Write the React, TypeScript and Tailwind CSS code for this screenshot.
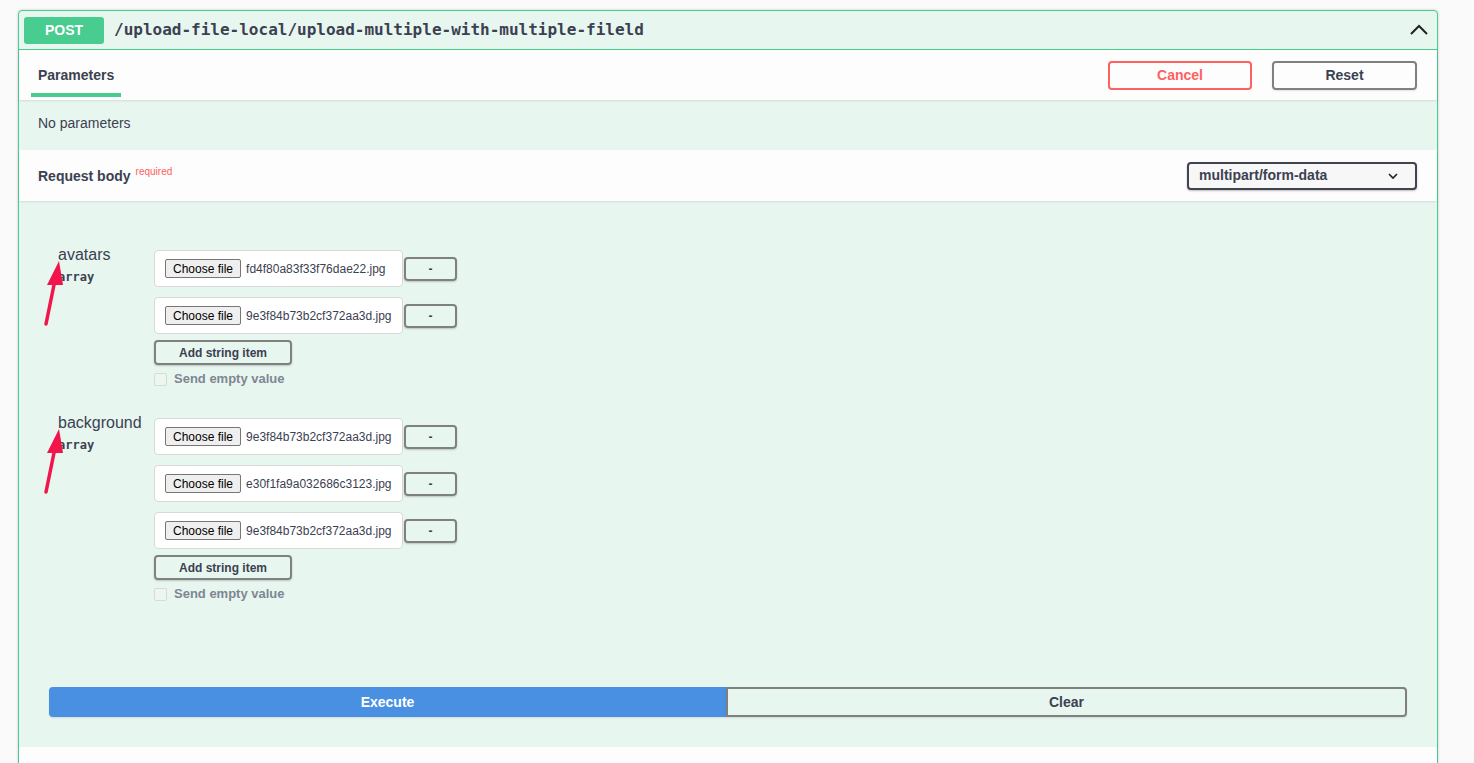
import React from 'react';

const sans = { fontFamily: '"Liberation Sans", Arial, sans-serif' };

function FileRow({ name }: { name: string }) {
  return (
    <div className="flex items-center">
      <div className="flex-none w-[249px] h-[37px] bg-white border border-[#d9d9d9] rounded-[4px] flex items-center pl-[10px] whitespace-nowrap">
        <span className="flex-none h-[19px] px-[7px] flex items-center bg-[#efefef] border border-[#767676] rounded-[2px] text-[12px] text-black">Choose file</span>
        <span className="ml-[5px] text-[12px] text-[#3b4151]">{name}</span>
      </div>
      <button className="flex-none ml-[1px] w-[53px] h-[24px] border-2 border-[#808080] rounded-[4px] shadow-[0_1px_2px_rgba(0,0,0,0.2)] text-[12px] font-bold text-[#3b4151] leading-none">-</button>
    </div>
  );
}

function Arrow() {
  return (
    <svg width="24" height="70" viewBox="0 0 24 70" className="absolute left-[4px] top-[14px]">
      <line x1="4" y1="64" x2="13" y2="20" stroke="#f2154b" strokeWidth="3.5" strokeLinecap="round" />
      <polygon points="17,1 5,25 21,25" fill="#f2154b" />
    </svg>
  );
}

function ArrayParam({ label, files }: { label: string; files: string[] }) {
  return (
    <div className="flex">
      <div className="flex-none w-[116px] pl-[20px] relative mt-[-4px]">
        <div className="text-[16px] text-[#3b4151] leading-[18px]">{label}</div>
        <div className="font-['DejaVu_Sans_Mono',monospace] font-bold text-[12px] text-[#3b4151] mt-[4px]">array</div>
        <Arrow />
      </div>
      <div className="flex flex-col">
        <div className="flex flex-col gap-[10px]">
          {files.map((f, i) => <FileRow key={i} name={f} />)}
        </div>
        <button className="mt-[6px] w-[138px] h-[25px] border-2 border-[#808080] rounded-[4px] shadow-[0_1px_2px_rgba(0,0,0,0.2)] text-[12px] font-bold text-[#3b4151]">Add string item</button>
        <div className="flex items-center mt-[6px] h-[16px]">
          <span className="w-[13px] h-[13px] border border-[#d6dbd8] rounded-[2px] bg-[#eef6f2]" />
          <span className="ml-[7px] text-[13px] font-bold text-[#7e8692]">Send empty value</span>
        </div>
      </div>
    </div>
  );
}

export default function App() {
  return (
    <div className="min-h-screen bg-[#fafafa] pt-[10px] pl-[18px]" style={sans}>
      <div className="w-[1420px] border border-[#49cc90] rounded-[4px] bg-[#e8f6f0] shadow-[0_0_3px_rgba(0,0,0,0.19)]">
        {/* Summary */}
        <div className="flex items-center h-[39px] px-[5px] border-b border-[#49cc90]">
          <span className="w-[80px] h-[27px] flex items-center justify-center bg-[#49cc90] rounded-[3px] text-white font-bold text-[14px]">POST</span>
          <span className="ml-[10px] font-['DejaVu_Sans_Mono',monospace] font-bold text-[16px] text-[#3b4151]">/upload-file-local/upload-multiple-with-multiple-fileld</span>
          <svg width="20" height="20" viewBox="0 0 20 20" className="ml-auto mr-[3px]">
            <path d="M2 14 L10 6 L18 14" fill="none" stroke="#222" strokeWidth="2" />
          </svg>
        </div>

        {/* Tab header */}
        <div className="flex items-center h-[50px] bg-[#fcfdfc] shadow-[0_1px_2px_rgba(0,0,0,0.1)] px-[12px]">
          <div className="h-full flex flex-col justify-center relative px-[7px]">
            <span className="text-[14px] font-bold text-[#3b4151]">Parameters</span>
            <span className="absolute left-0 right-0 bottom-[3px] h-[4px] bg-[#49cc90]" />
          </div>
          <button className="ml-auto w-[144px] h-[29px] border-2 border-[#ff6060] rounded-[4px] text-[14px] font-bold text-[#ff6060]">Cancel</button>
          <button className="ml-[20px] mr-[8px] w-[145px] h-[29px] border-2 border-[#808080] rounded-[4px] text-[14px] font-bold text-[#3b4151] shadow-[0_1px_2px_rgba(0,0,0,0.1)]">Reset</button>
        </div>

        <div className="h-[50px] flex items-center pb-[4px] px-[19px] text-[14px] text-[#3b4151]">No parameters</div>

        {/* Request body header */}
        <div className="flex items-center h-[51px] bg-[#fcfdfc] shadow-[0_1px_2px_rgba(0,0,0,0.1)] px-[19px]">
          <span className="text-[14px] font-bold text-[#3b4151] mt-[1px]">Request body</span>
          <span className="text-[10px] text-[#ff6060] ml-[5px] mb-[9px]">required</span>
          <div className="ml-auto mr-[1px] w-[230px] h-[28px] border-2 border-[#41444e] rounded-[4px] bg-[#f7f7f7] flex items-center px-[10px] shadow-[0_1px_2px_rgba(0,0,0,0.25)]">
            <span className="text-[14px] font-bold text-[#3b4151]">multipart/form-data</span>
            <svg width="12" height="8" viewBox="0 0 12 8" className="ml-auto mr-[6px]">
              <path d="M2 2 L6 6 L10 2" fill="none" stroke="#222" strokeWidth="1.6" />
            </svg>
          </div>
        </div>

        {/* Body */}
        <div className="pt-[49px] px-[19px] flex flex-col gap-[31px]">
          <ArrayParam label="avatars" files={['fd4f80a83f33f76dae22.jpg', '9e3f84b73b2cf372aa3d.jpg']} />
          <ArrayParam label="background" files={['9e3f84b73b2cf372aa3d.jpg', 'e30f1fa9a032686c3123.jpg', '9e3f84b73b2cf372aa3d.jpg']} />
        </div>

        <div className="flex px-[30px] mt-[85px] pb-[30px]">
          <button className="flex-1 h-[30px] bg-[#4990e2] rounded-l-[4px] text-white font-bold text-[14px] shadow-[0_1px_2px_rgba(0,0,0,0.1)]">Execute</button>
          <button className="flex-1 h-[30px] border-2 border-[#808080] rounded-r-[4px] text-[#3b4151] font-bold text-[14px] shadow-[0_1px_2px_rgba(0,0,0,0.1)]">Clear</button>
        </div>

        <div className="h-[40px] bg-[#fcfdfc]" />
      </div>
    </div>
  );
}
